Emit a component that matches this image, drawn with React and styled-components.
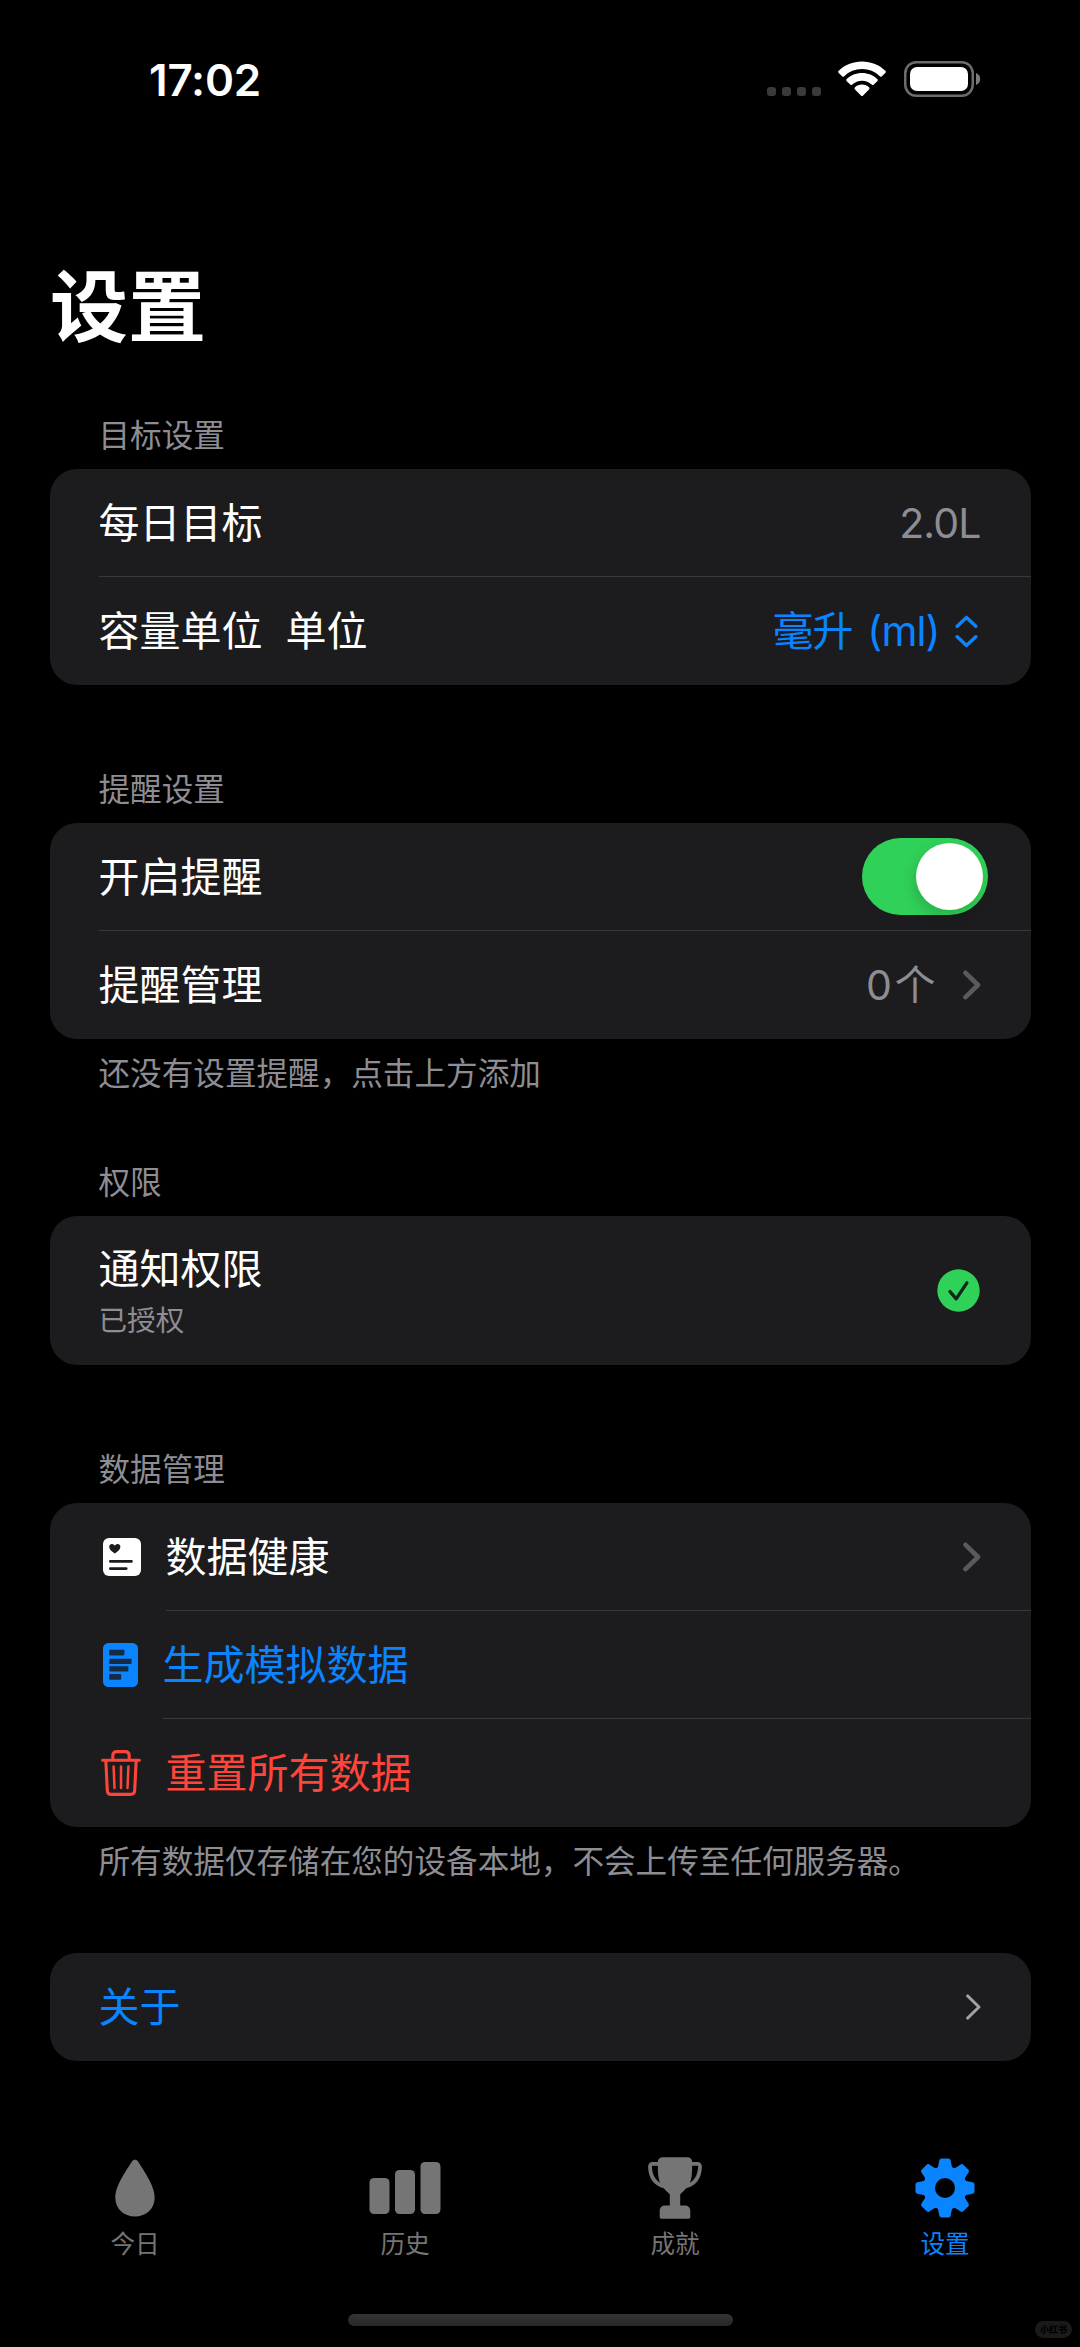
import React from "react";
import styled, { createGlobalStyle, css } from "styled-components";

const color = {
  blue: "#0a84ff",
  red: "#ff453a",
  green: "#30d158",
  card: "#1c1c1e",
  line: "#38383a",
  gray: "#8d8d93",
  tab: "#757575"
};

const GlobalStyle = createGlobalStyle`
  * {
    box-sizing: border-box;
  }
  body {
    margin: 0;
    background: #000000;
    color: #ffffff;
    font-family: Inter, "Noto Sans CJK SC", sans-serif;
    -webkit-font-smoothing: antialiased;
  }
  svg {
    display: block;
    flex-shrink: 0;
  }
`;

const Screen = styled.div`
  display: flex;
  flex-direction: column;
  position: relative;
  width: 1080px;
  height: 2347px;
  overflow: hidden;
  background: #000000;
`;

const StatusBar = styled.div`
  display: flex;
  justify-content: space-between;
  height: 134px;
  padding: 52px 99px 0 149px;
`;
const Clock = styled.div`
  font-size: 44px;
  font-weight: 600;
  line-height: 56px;
  letter-spacing: -0.2px;
`;
const StatusIcons = styled.div`
  display: flex;
  align-items: flex-start;
  padding-top: 9px;
`;
const SignalDots = styled.div`
  display: flex;
  gap: 6px;
  margin: 26px 17px 0 0;
`;
const Dot = styled.span`
  width: 9px;
  height: 9px;
  border-radius: 3px;
  background: #3a3a3a;
`;

const PageTitle = styled.h1`
  height: 281px;
  margin: 0;
  padding: 116px 0 0 50px;
  font-size: 78px;
  font-weight: 700;
  line-height: 116px;
`;

const Content = styled.div`
  display: flex;
  flex-direction: column;
  padding: 0 49.5px;
`;
const Section = styled.section`
  display: flex;
  flex-direction: column;
  margin-bottom: ${({ $gap }) => $gap || 0}px;
`;
const Caption = styled.div`
  height: 40px;
  padding-left: 49px;
  color: ${color.gray};
  font-size: 31.6px;
  line-height: 41px;
`;
const SectionHeader = styled(Caption)`
  margin-bottom: 14px;
`;
const SectionFooter = styled(Caption)`
  margin-top: 14px;
`;
const Card = styled.div`
  display: flex;
  flex-direction: column;
  border-radius: 27px;
  background: ${color.card};
  overflow: hidden;
`;
const Row = styled.div`
  display: flex;
  align-items: center;
  height: ${({ $height }) => $height || 108}px;
  padding-left: 49px;
`;
const RowIcon = styled.div`
  display: flex;
  align-items: center;
  width: ${({ $width }) => $width || 67}px;
  padding-left: ${({ $inset }) => $inset || 4}px;
`;
const RowBody = styled.div`
  display: flex;
  flex-grow: 1;
  align-items: center;
  justify-content: space-between;
  height: 100%;
  padding-right: ${({ $right }) => $right || 50}px;
  ${({ $divider }) =>
    $divider &&
    css`
      border-bottom: 1px solid ${color.line};
    `}
`;
const Label = styled.div`
  color: ${({ $color }) => $color || "#ffffff"};
  font-size: 41px;
  line-height: 56px;
  white-space: pre;
`;
const Value = styled(Label)`
  display: flex;
  align-items: center;
  letter-spacing: ${({ $spacing }) => $spacing || -0.9}px;
  word-spacing: 4px;
`;
const Stack = styled.div`
  display: flex;
  flex-direction: column;
`;
const SubLabel = styled.div`
  color: ${color.gray};
  font-size: 28.6px;
  line-height: 40px;
  margin-top: 4px;
`;
const UnitIcon = styled.div`
  margin-left: 15.5px;
`;
const ChevronSlot = styled.div`
  margin-left: 24.5px;
`;

const Toggle = styled.div`
  display: flex;
  justify-content: flex-end;
  align-items: center;
  width: 126px;
  height: 77px;
  padding-right: 5px;
  border-radius: 39px;
  background: ${color.green};
`;
const Knob = styled.div`
  width: 67px;
  height: 67px;
  border-radius: 50%;
  background: #ffffff;
  box-shadow: -2px 6px 14px rgba(0, 0, 0, 0.16);
`;

const TabBar = styled.nav`
  display: flex;
  margin-top: 92px;
`;
const Tab = styled.div`
  display: flex;
  flex-direction: column;
  align-items: center;
  width: 270px;
  color: ${({ $active }) => ($active ? color.blue : color.tab)};
`;
const TabIcon = styled.div`
  display: flex;
  align-items: center;
  height: 70px;
`;
const TabLabel = styled.div`
  margin: 3px 0 1px;
  font-size: 24.6px;
  line-height: 36px;
`;
const HomeIndicator = styled.div`
  width: 385px;
  height: 12px;
  margin: 51px 0 0 348px;
  border-radius: 6px;
  background: linear-gradient(#343434, #282828);
`;
const Watermark = styled.div`
  position: absolute;
  right: 8px;
  bottom: 9px;
  width: 37px;
  height: 17px;
  border-radius: 9px;
  background: #1a1a1a;
  color: #000000;
  font-size: 9px;
  font-weight: 900;
  line-height: 17px;
  text-align: center;
`;

const Wifi = () => (
  <svg width="48" height="36" viewBox="0 0 48 36" fill="#ffffff">
    <path d="M24 0.5C33.2 0.5 41.4 4 47.3 9.7a1.5 1.5 0 0 1 0 2.2L43.9 15.2a1.5 1.5 0 0 1-2.1 0A25.6 25.6 0 0 0 24 8.1 25.6 25.6 0 0 0 6.2 15.2a1.5 1.5 0 0 1-2.1 0L0.7 11.9a1.5 1.5 0 0 1 0-2.2C6.6 4 14.8 0.5 24 0.5Z" />
    <path d="M24 12c6 0 11.4 2.3 15.3 6a1.5 1.5 0 0 1 0 2.2l-3.5 3.4a1.5 1.5 0 0 1-2.1 0A14 14 0 0 0 24 19.7a14 14 0 0 0-9.7 3.9 1.5 1.5 0 0 1-2.1 0l-3.5-3.4a1.5 1.5 0 0 1 0-2.2C12.6 14.3 18 12 24 12Z" />
    <path d="M24 23.6c2.7 0 5.1 1 7 2.6a1.5 1.5 0 0 1 0 2.2l-5.9 6a1.5 1.5 0 0 1-2.2 0l-5.9-6a1.5 1.5 0 0 1 0-2.2c1.9-1.6 4.3-2.6 7-2.6Z" />
  </svg>
);

const BatteryIcon = styled.svg`
  margin-left: 18px;
`;
const Battery = () => (
  <BatteryIcon width="77" height="36" viewBox="0 0 77 36">
    <rect x="1.25" y="1.25" width="67.5" height="33.5" rx="11" fill="none" stroke="#6c6c6c" strokeWidth="2.5" />
    <rect x="6" y="6" width="58" height="24" rx="7" fill="#ffffff" />
    <path d="M72 12c2.6 1 4.2 3.3 4.2 6s-1.600 5-4.200 6Z" fill="#7c7c7c" />
  </BatteryIcon>
);

const Chevron = () => (
  <svg width="18" height="30" viewBox="0 0 18 30" fill="none" stroke="#5a5a5c" strokeWidth="4.6" strokeLinecap="round" strokeLinejoin="round">
    <path d="M2.500 2.800 15 15 2.500 27.200" />
  </svg>
);

const ThinChevron = () => (
  <svg width="15" height="26" viewBox="0 0 15 26" fill="none" stroke="#a2a2a6" strokeWidth="2.9" strokeLinecap="round" strokeLinejoin="round">
    <path d="M1.600 1.900 13 13 1.600 24.100" />
  </svg>
);

const UpDown = () => (
  <svg width="23" height="33" viewBox="0 0 23 33" fill="none" stroke={color.blue} strokeWidth="3.5" strokeLinecap="round" strokeLinejoin="round">
    <path d="M2.200 11.200 11.500 2.400l9.300 8.800M2.200 21.800l9.300 8.800 9.300-8.800" />
  </svg>
);

const CheckCircle = () => (
  <svg width="43" height="43" viewBox="0 0 43 43">
    <circle cx="21.5" cy="21.5" r="21.2" fill={color.green} />
    <path d="M13 22.600l6.200 7.200L29.900 13.800" fill="none" stroke="#10281a" strokeWidth="3.3" strokeLinecap="round" strokeLinejoin="round" />
  </svg>
);

const HealthIcon = () => (
  <svg width="38" height="38" viewBox="0 0 38 38">
    <rect width="38" height="38" rx="6" fill="#ffffff" />
    <path d="M11.800 15.600C9 13.600 6.200 11.400 6.200 8.800 6.200 7 7.400 5.900 9 5.900c1.200 0 2.200.7 2.800 1.800.6-1.100 1.600-1.800 2.800-1.800 1.600 0 2.800 1.100 2.800 2.900 0 2.600-2.800 4.800-5.600 6.800Z" fill={color.card} />
    <path d="M7.300 23.400h21.200M7.300 30.600h16" stroke={color.card} strokeWidth="2.6" strokeLinecap="round" />
  </svg>
);

const DocIcon = () => (
  <svg width="35" height="44" viewBox="0 0 35 44">
    <rect width="35" height="44" rx="5.5" fill={color.blue} />
    <g fill="#152a44">
      <rect x="6.2" y="6.8" width="15.2" height="5.6" rx="0.8" />
      <rect x="6.2" y="15.8" width="22.4" height="5.2" rx="0.8" />
      <rect x="6.2" y="23.2" width="19.2" height="5.4" rx="0.8" />
      <rect x="6.2" y="31" width="12" height="5.8" rx="0.8" />
    </g>
  </svg>
);

const TrashIcon = () => (
  <svg width="40" height="46" viewBox="0 0 40 46" fill="none" stroke={color.red} strokeWidth="3.1" strokeLinecap="round" strokeLinejoin="round">
    <path d="M1.600 10.200h36.800M11.800 10V5.600c0-2.600 1.400-4 4-4h8.400c2.600 0 4 1.400 4 4V10" />
    <path d="M4.800 10.500l1.500 29.800c.1 2.700 1.700 4.100 4.200 4.100h19c2.500 0 4.100-1.400 4.200-4.100l1.500-29.800" />
    <path d="M12.600 16.500l.9 21.500M20 16.500V38M27.400 16.500L26.500 38" strokeWidth="2.5" />
  </svg>
);

const DropIcon = () => (
  <svg width="40" height="58" viewBox="0 0 40 58" fill="currentColor">
    <path d="M16.900 2.500c1.400-2.400 4.800-2.400 6.200 0 5.200 8.900 16.600 23.500 16.600 36.100C39.700 49.900 31.200 57.600 20 57.600S0.300 49.900 0.300 38.600C0.300 26 11.700 11.400 16.900 2.500Z" />
  </svg>
);

const BarsIcon = () => (
  <svg width="72" height="52" viewBox="0 0 72 52" fill="currentColor">
    <rect x="0.5" y="16" width="20" height="36" rx="4.5" />
    <rect x="26" y="8" width="20" height="44" rx="4.5" />
    <rect x="51.5" y="0" width="20" height="52" rx="4.5" />
  </svg>
);

const TrophyIcon = () => (
  <svg width="54" height="62" viewBox="0 0 54 62">
    <path
      fill="currentColor"
      d="M15 0.300h24c3.200 0 5.200 1.600 5.200 4.900 0 9-.2 16-2.400 20.800-2 4.600-6 8-9.600 11.200V48.400h4c4 0 6.100 2 6.100 5.600V60c0 1-.7 1.700-1.700 1.700H13.400c-1 0-1.700-.7-1.700-1.700v-6c0-3.600 2.100-5.600 6.100-5.600h4V37.200c-3.600-3.200-7.600-6.600-9.600-11.200C10 21.200 9.800 14.200 9.800 5.200 9.800 1.900 11.800.3 15 .3Z"
    />
    <path
      fill="none"
      stroke="currentColor"
      strokeWidth="3.8"
      d="M11.500 6.900H4.600c-1.800 0-2.700 1-2.600 3C2.400 20.200 6.800 26.800 16 29.400M42.500 6.900h6.900c1.800 0 2.700 1 2.600 3C51.600 20.200 47.200 26.800 38 29.400"
    />
  </svg>
);

const GearIcon = () => (
  <svg width="60" height="60" viewBox="-30 -30 60 60">
    <circle r="15.8" fill="none" stroke="currentColor" strokeWidth="11.6" />
    {[0, 45, 90, 135, 180, 225, 270, 315].map(angle => (
      <path
        key={angle}
        transform={`rotate(${angle})`}
        fill="currentColor"
        d="M-3.200-29.500H3.200C4.700-29.500 5.400-28.700 5.700-27.300L6.900-21.500 9.500-18H-9.500L-6.900-21.500-5.700-27.300C-5.400-28.700-4.700-29.500-3.200-29.500Z"
      />
    ))}
  </svg>
);

const tabs = [
  { label: "今日", icon: <DropIcon /> },
  { label: "历史", icon: <BarsIcon /> },
  { label: "成就", icon: <TrophyIcon /> },
  { label: "设置", icon: <GearIcon />, active: true }
];

const App = () => (
  <Screen lang="zh-CN">
    <GlobalStyle />
    <StatusBar>
      <Clock>17:02</Clock>
      <StatusIcons>
        <SignalDots>
          <Dot />
          <Dot />
          <Dot />
          <Dot />
        </SignalDots>
        <Wifi />
        <Battery />
      </StatusIcons>
    </StatusBar>
    <PageTitle>设置</PageTitle>
    <Content>
      <Section $gap={84}>
        <SectionHeader>目标设置</SectionHeader>
        <Card>
          <Row>
            <RowBody $divider>
              <Label>每日目标</Label>
              <Value $color={color.gray}>2.0L</Value>
            </RowBody>
          </Row>
          <Row>
            <RowBody $right={52.5}>
              <Label>容量单位&nbsp; 单位</Label>
              <Value $color={color.blue}>
                毫升 (ml)
                <UnitIcon>
                  <UpDown />
                </UnitIcon>
              </Value>
            </RowBody>
          </Row>
        </Card>
      </Section>
      <Section $gap={69}>
        <SectionHeader>提醒设置</SectionHeader>
        <Card>
          <Row>
            <RowBody $divider $right={43}>
              <Label>开启提醒</Label>
              <Toggle>
                <Knob />
              </Toggle>
            </RowBody>
          </Row>
          <Row>
            <RowBody>
              <Label>提醒管理</Label>
              <Value $color={color.gray} $spacing={2.6}>
                0个
                <ChevronSlot>
                  <Chevron />
                </ChevronSlot>
              </Value>
            </RowBody>
          </Row>
        </Card>
        <SectionFooter>还没有设置提醒，点击上方添加</SectionFooter>
      </Section>
      <Section $gap={84}>
        <SectionHeader>权限</SectionHeader>
        <Card>
          <Row $height={149}>
            <RowBody $right={51}>
              <Stack>
                <Label>通知权限</Label>
                <SubLabel>已授权</SubLabel>
              </Stack>
              <CheckCircle />
            </RowBody>
          </Row>
        </Card>
      </Section>
      <Section $gap={72}>
        <SectionHeader>数据管理</SectionHeader>
        <Card>
          <Row>
            <RowIcon>
              <HealthIcon />
            </RowIcon>
            <RowBody $divider>
              <Label>数据健康</Label>
              <Chevron />
            </RowBody>
          </Row>
          <Row>
            <RowIcon $width={64}>
              <DocIcon />
            </RowIcon>
            <RowBody $divider>
              <Label $color={color.blue}>生成模拟数据</Label>
            </RowBody>
          </Row>
          <Row>
            <RowIcon $inset={2.5}>
              <TrashIcon />
            </RowIcon>
            <RowBody>
              <Label $color={color.red}>重置所有数据</Label>
            </RowBody>
          </Row>
        </Card>
        <SectionFooter>所有数据仅存储在您的设备本地，不会上传至任何服务器。</SectionFooter>
      </Section>
      <Section>
        <Card>
          <Row>
            <RowBody>
              <Label $color={color.blue}>关于</Label>
              <ThinChevron />
            </RowBody>
          </Row>
        </Card>
      </Section>
    </Content>
    <TabBar>
      {tabs.map(tab => (
        <Tab key={tab.label} $active={tab.active}>
          <TabIcon>{tab.icon}</TabIcon>
          <TabLabel>{tab.label}</TabLabel>
        </Tab>
      ))}
    </TabBar>
    <HomeIndicator />
    <Watermark>小红书</Watermark>
  </Screen>
);

export default App;
